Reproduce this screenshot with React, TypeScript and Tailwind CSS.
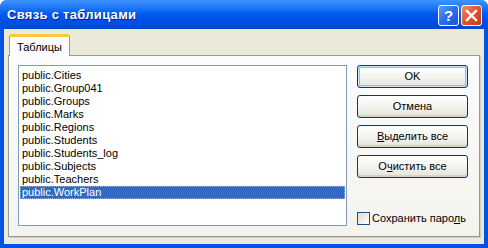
import React from "react";

const items = [
  "public.Cities",
  "public.Group041",
  "public.Groups",
  "public.Marks",
  "public.Regions",
  "public.Students",
  "public.Students_log",
  "public.Subjects",
  "public.Teachers",
  "public.WorkPlan",
];

const XpButton: React.FC<{ children: React.ReactNode; primary?: boolean }> = ({ children, primary }) => (
  <button
    className={`h-[23px] w-[111px] rounded-[3px] border border-[#003c74] bg-gradient-to-b from-[#ffffff] via-[#f4f4f0] to-[#e3e2da] text-[11px] text-black leading-none ${
      primary ? "shadow-[inset_0_0_0_1px_#cee7ff,inset_0_0_0_2px_#98b8ea]" : "shadow-[inset_0_-2px_0_#d6d0c5]"
    }`}
  >
    {children}
  </button>
);

export default function App() {
  return (
    <div className="w-[488px] h-[248px] flex flex-col bg-[#0054e3] rounded-t-[7px] overflow-hidden font-['Liberation_Sans',Arial,sans-serif]">
      {/* заголовок окна */}
      <div className="h-[30px] flex items-center pl-[7px] pr-[6px] bg-gradient-to-b from-[#3d95ff] via-[#0058ee] to-[#0047d6]">
        <span className="text-white font-bold text-[13px] tracking-[0.3px] [text-shadow:1px_1px_0_#0a1e8c]">
          Связь с таблицами
        </span>
        <div className="ml-auto flex gap-[2px] pt-[1px]">
          <div className="w-[21px] h-[21px] rounded-[3px] border border-white bg-gradient-to-br from-[#5a9bff] via-[#2a6cf0] to-[#1a55d6] flex items-center justify-center text-white font-bold text-[15px] leading-none">
            ?
          </div>
          <div className="w-[21px] h-[21px] rounded-[3px] border border-white bg-gradient-to-br from-[#f08a6a] via-[#e2512a] to-[#c63a14] flex items-center justify-center">
            <svg width="13" height="13" viewBox="0 0 13 13">
              <path d="M2 2 L11 11 M11 2 L2 11" stroke="white" strokeWidth="2.4" strokeLinecap="square" />
            </svg>
          </div>
        </div>
      </div>

      {/* тело диалога */}
      <div className="flex-1 mx-[4px] mb-[4px] bg-[#ece9d8] pl-[4px] pr-[4px] pt-[5px] pb-[7px] flex flex-col">
        <div className="flex">
          <div className="ml-[1px] h-[22px] px-[7px] pt-[5px] bg-[#fcfcfe] border-x border-[#919b9c] border-t-[3px] border-t-[#ffc83c] rounded-t-[3px] text-[11px] text-black leading-none relative z-10 -mb-px">
            Таблицы
          </div>
        </div>
        <div className="flex-1 flex border border-[#919b9c] bg-gradient-to-b from-[#fcfcfe] to-[#f4f3ee] pl-[9px] pt-[9px] pr-[10px] pb-[10px] shadow-[1px_1px_0_#d0cec3]">
          <div className="w-[329px] h-[161px] bg-white border border-[#7f9db9] pt-[3px] px-[1px]">
            {items.map((it, i) => (
              <div
                key={it}
                className={`h-[13px] pl-[2px] text-[11px] leading-[13px] ${
                  i === items.length - 1 ? "bg-[#316ac5] text-white outline-1 outline-dotted outline-[#9db5e0] -outline-offset-1" : "text-black"
                }`}
              >
                {it}
              </div>
            ))}
          </div>
          <div className="ml-[10px] flex flex-col">
            <div className="flex flex-col gap-[7px]">
              <XpButton primary>OK</XpButton>
              <XpButton>Отмена</XpButton>
              <XpButton>
                <span className="underline">В</span>ыделить все
              </XpButton>
              <XpButton>
                О<span className="underline">ч</span>истить все
              </XpButton>
            </div>
            <div className="mt-auto mb-[1px] flex items-center gap-[2px]">
              <div className="w-[13px] h-[13px] border border-[#1c5180] bg-gradient-to-br from-[#dcdcd7] to-[#ffffff]" />
              <span className="text-[11px] text-black leading-none">
                Сохранить паро<span className="underline">л</span>ь
              </span>
            </div>
          </div>
        </div>
      </div>
    </div>
  );
}
